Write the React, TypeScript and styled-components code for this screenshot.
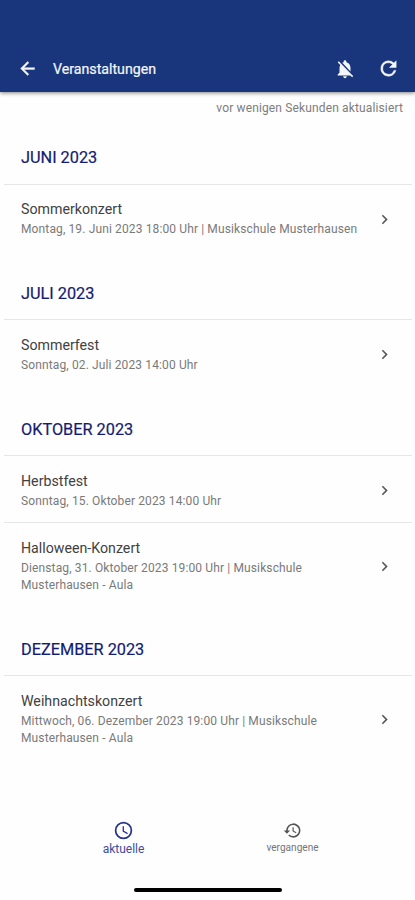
import React from 'react';
import styled, { createGlobalStyle } from 'styled-components';

const GlobalStyle = createGlobalStyle`
  * { box-sizing: border-box; }
  body { margin: 0; background: #fefefe; font-family: Roboto, sans-serif; }
  button { font: inherit; color: inherit; background: none; border: 0; padding: 0; }
`;

const Screen = styled.div`
  width: 415px;
  height: 900px;
  display: flex;
  flex-direction: column;
  background: #fefefe;
  overflow: hidden;
`;

const AppBar = styled.header`
  flex: none;
  height: 92px;
  padding: 45px 15px 0 16.5px;
  display: flex;
  align-items: center;
  background: #19367c;
  color: #f4f6fb;
  box-shadow: 0 1px 4px rgba(0, 0, 0, 0.5);
  z-index: 1;
`;

const BarButton = styled.button`
  display: flex;
  margin-left: 21.5px;
  &:first-child { margin-left: 0; }
`;

const Title = styled.h1`
  flex: 1;
  margin: 1px 0 0 15.5px;
  font-size: 14.2px;
  font-weight: 400;
  -webkit-text-stroke: 0.2px currentColor;
  line-height: 20px;
`;

const Updated = styled.p`
  flex: none;
  height: 31px;
  margin: 0;
  padding: 7px 12px 0;
  text-align: right;
  font-size: 12px;
  letter-spacing: 0.14px;
  line-height: 18px;
  color: #7d7d7d;
`;

const EventList = styled.main`
  flex: 1;
  padding: 0 3px 0 4px;
`;

const MonthTitle = styled.h2<{ $height: number }>`
  height: ${(p) => p.$height}px;
  margin: 0;
  padding: 0 17px 15.5px;
  display: flex;
  align-items: flex-end;
  font-size: 16.3px;
  font-weight: 400;
  -webkit-text-stroke: 0.2px currentColor;
  line-height: 20px;
  color: #131c72;
`;

const EventRow = styled.article`
  display: flex;
  align-items: center;
  padding: 15.5px 18px 12.6px 17px;
  border-top: 1px solid #e6e6e6;
`;

const EventText = styled.div`
  flex: 1;
`;

const EventName = styled.h3`
  margin: 0 0 3px;
  font-size: 14.2px;
  font-weight: 400;
  line-height: 18px;
  color: #414141;
`;

const EventDetail = styled.p`
  margin: 0;
  width: 340px;
  font-size: 12px;
  letter-spacing: 0.128px;
  line-height: 17.2px;
  color: #7a7a7a;
  white-space: pre-line;
`;

const TabBar = styled.nav`
  flex: none;
  height: 62px;
  padding: 0 38px 0 39px;
  display: flex;
`;

const Tab = styled.button<{ $active?: boolean }>`
  flex: 1;
  display: flex;
  flex-direction: column;
  align-items: center;
  padding-top: ${(p) => (p.$active ? 0 : 1)}px;
  color: ${(p) => (p.$active ? '#26348a' : '#555')};
`;

const TabLabel = styled.span<{ $active?: boolean }>`
  font-size: ${(p) => (p.$active ? 12 : 10.1)}px;
  line-height: 16px;
  color: ${(p) => (p.$active ? '#414d99' : '#757575')};
`;

const HomeArea = styled.footer`
  flex: none;
  height: 18px;
  display: flex;
  justify-content: center;
  align-items: flex-start;
  padding-top: 6px;
`;

const HomeIndicator = styled.div`
  width: 148px;
  height: 4px;
  border-radius: 2px;
  background: #000;
`;

const Glyph = styled.svg<{ $size: number; $bold?: boolean }>`
  display: block;
  flex: none;
  width: ${(p) => p.$size}px;
  height: ${(p) => p.$size}px;
  fill: currentColor;
  stroke: currentColor;
  stroke-width: ${(p) => (p.$bold ? 0.5 : 0)};
`;

const Chevron = styled(Glyph)`
  color: #555;
  margin-left: -20px;
`;

const icons = {
  back: 'M20 11v2H8l5.5 5.5-1.42 1.42L4.16 12l7.92-7.92L13.5 5.5 8 11h12Z',
  bellOff:
    'M20 18.69 7.84 6.14 5.27 3.49 4 4.76l2.8 2.8v.01c-.52.99-.8 2.16-.8 3.42v5l-2 2v1h13.73l2 2L21 19.72l-1-1.03ZM12 22c1.11 0 2-.89 2-2h-4c0 1.11.89 2 2 2Zm6-7.32V11c0-3.08-1.64-5.64-4.5-6.32V4c0-.83-.67-1.5-1.5-1.5s-1.5.67-1.5 1.5v.68c-.5.11-.97.3-1.43.54L18 14.68Z',
  refresh:
    'M17.65 6.35A7.96 7.96 0 0 0 12 4a8 8 0 1 0 7.73 10h-2.08A6 6 0 1 1 12 6c1.66 0 3.14.69 4.22 1.78L13 11h7V4l-2.35 2.35Z',
  chevron: 'M8.59 16.58 13.17 12 8.59 7.41 10 6l6 6-6 6-1.41-1.42Z',
  clock:
    'M12 20a8 8 0 1 0 0-16 8 8 0 0 0 0 16Zm0-18a10 10 0 1 1 0 20 10 10 0 0 1 0-20Zm.5 5v5.25l4.5 2.67-.75 1.23L11 13V7h1.5Z',
  history:
    'M13.5 8H12v5l4.28 2.54.72-1.21-3.5-2.08V8ZM13 3a9 9 0 0 0-9 9H1l3.96 4.03L9 12H6a7 7 0 1 1 2.06 4.94l-1.42 1.42A9 9 0 1 0 13 3Z',
};

const Icon = ({ name, size, bold }: { name: keyof typeof icons; size: number; bold?: boolean }) => (
  <Glyph $size={size} $bold={bold} viewBox="0 0 24 24" aria-hidden>
    <path d={icons[name]} />
  </Glyph>
);

const months = [
  {
    title: 'JUNI 2023',
    height: 60.5,
    events: [{ name: 'Sommerkonzert', detail: 'Montag, 19. Juni 2023 18:00 Uhr | Musikschule Musterhausen' }],
  },
  { title: 'JULI 2023', height: 68.5, events: [{ name: 'Sommerfest', detail: 'Sonntag, 02. Juli 2023 14:00 Uhr' }] },
  {
    title: 'OKTOBER 2023',
    height: 68.5,
    events: [
      { name: 'Herbstfest', detail: 'Sonntag, 15. Oktober 2023 14:00 Uhr' },
      { name: 'Halloween-Konzert', detail: 'Dienstag, 31. Oktober 2023 19:00 Uhr | Musikschule\nMusterhausen - Aula' },
    ],
  },
  {
    title: 'DEZEMBER 2023',
    height: 68.5,
    events: [
      { name: 'Weihnachtskonzert', detail: 'Mittwoch, 06. Dezember 2023 19:00 Uhr | Musikschule\nMusterhausen - Aula' },
    ],
  },
];

export default function App() {
  return (
    <Screen>
      <GlobalStyle />
      <AppBar>
        <BarButton aria-label="Zurück"><Icon name="back" size={21} bold /></BarButton>
        <Title>Veranstaltungen</Title>
        <BarButton aria-label="Benachrichtigungen aus"><Icon name="bellOff" size={22} /></BarButton>
        <BarButton aria-label="Aktualisieren"><Icon name="refresh" size={23} bold /></BarButton>
      </AppBar>
      <Updated>vor wenigen Sekunden aktualisiert</Updated>
      <EventList>
        {months.map((month) => (
          <section key={month.title}>
            <MonthTitle $height={month.height}>{month.title}</MonthTitle>
            {month.events.map((event) => (
              <EventRow key={event.name}>
                <EventText>
                  <EventName>{event.name}</EventName>
                  <EventDetail>{event.detail}</EventDetail>
                </EventText>
                <Chevron $size={19} viewBox="0 0 24 24" aria-hidden>
                  <path d={icons.chevron} />
                </Chevron>
              </EventRow>
            ))}
          </section>
        ))}
      </EventList>
      <TabBar>
        <Tab $active>
          <Icon name="clock" size={21} />
          <TabLabel $active>aktuelle</TabLabel>
        </Tab>
        <Tab>
          <Icon name="history" size={19} />
          <TabLabel>vergangene</TabLabel>
        </Tab>
      </TabBar>
      <HomeArea><HomeIndicator /></HomeArea>
    </Screen>
  );
}
